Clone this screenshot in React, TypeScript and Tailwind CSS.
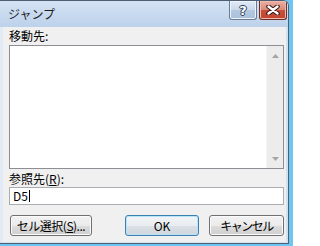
const btn =
  "h-[21px] rounded-[3px] border border-[#707070] bg-[linear-gradient(#f2f2f2,#ebebeb_50%,#dddddd_50%,#cfcfcf)] shadow-[inset_0_0_0_1px_#fbfbfb] flex items-center justify-center text-[12px] leading-[14px]";

const Arrow = ({ up }: { up?: boolean }) => (
  <svg width="7" height="4" viewBox="0 0 7 4">
    <path d={up ? "M3.5 0 L7 4 L0 4 Z" : "M0 0 L7 0 L3.5 4 Z"} fill="#a5a5a5" />
  </svg>
);

export default function App() {
  return (
    <div className="w-[293px] h-[246px] bg-[#6cc6f1] font-['Noto_Sans_CJK_JP',sans-serif] text-[12px] leading-[14px] text-black">
      <div className="w-[289px] h-[244px] flex flex-col border-t border-r border-b border-[#4f5f73] rounded-tr-[6px] bg-[#d3e0ef] overflow-hidden">
        {/* title bar */}
        <div className="h-[26px] flex items-start bg-[linear-gradient(#d4e3f4,#bcd1ea)]">
          <div className="pl-[8px] pt-[5px] leading-[15px] text-[#1e1e1e]">ジャンプ</div>
          <div className="ml-auto flex gap-[2px] pr-[1px]">
            <div className="w-[28px] h-[19px] rounded-b-[3px] border border-t-0 border-[#6b7b93] bg-[linear-gradient(#e2ebf6,#c9d8ea_50%,#b4c8e0_50%,#a9c0dc)] shadow-[inset_0_0_0_1px_#eef4fb] flex items-center justify-center">
              <span className="font-['DejaVu_Sans',sans-serif] font-bold text-[13px] leading-[13px] text-white [text-shadow:1px_0_#2d3e55,-1px_0_#2d3e55,0_1px_#2d3e55,0_-1px_#2d3e55]">
                ?
              </span>
            </div>
            <div className="w-[28px] h-[19px] rounded-b-[3px] border border-t-0 border-[#6d2d24] bg-[linear-gradient(#eab0a3,#d98877_50%,#c6503c_50%,#c2442f)] shadow-[inset_0_0_0_1px_#efb9ad] flex items-center justify-center">
              <svg width="14" height="10" viewBox="0 0 14 10">
                <path d="M2.5 1.5 L11.5 8.5 M11.5 1.5 L2.5 8.5" stroke="#3b1a14" strokeWidth="4.5" strokeLinecap="round" />
                <path d="M2.5 1.5 L11.5 8.5 M11.5 1.5 L2.5 8.5" stroke="#ffffff" strokeWidth="2.4" strokeLinecap="round" />
              </svg>
            </div>
          </div>
        </div>

        <div className="flex flex-1">
          <div className="w-[3px] bg-[#e1eaf5]" />
          {/* client area */}
          <div className="w-[283px] flex flex-col bg-[#f0f0f0] pl-[6px] pr-[2px] pt-[2px]">
            <div className="h-[14px]">移動先:</div>
            <div className="mt-[2px] h-[124px] flex border border-[#8d8f94] bg-white">
              <div className="flex-1" />
              <div className="w-[17px] flex flex-col items-center justify-between pt-[8px] pb-[7px] bg-[#ececec] border-l border-[#f6f6f6]">
                <Arrow up />
                <Arrow />
              </div>
            </div>
            <div className="h-[18px] pt-[3px]">
              参照先(<span className="underline">R</span>):
            </div>
            <div className="h-[18px] flex items-center border border-[#abadb3] bg-white pl-[3px]">
              <span className="leading-[14px]">D5</span>
              <span className="ml-[1px] w-[1px] h-[12px] bg-black" />
            </div>
            <div className="mt-[10px] flex">
              <div className={`${btn} ml-[1px] w-[82px] tracking-[-0.5px]`}>
                セル選択(<span className="underline">S</span>)...
              </div>
              <div className="ml-auto flex gap-[10px]">
                <div className="w-[74px] h-[21px] rounded-[3px] border border-[#3c7fb1] bg-[linear-gradient(#f2f4f6,#e9edf1_50%,#dbe1e6_50%,#cfd6dc)] shadow-[inset_0_0_0_1px_#b9e3f8] flex items-center justify-center">
                  OK
                </div>
                <div className={`${btn} w-[75px] tracking-[-1.5px]`}>キャンセル</div>
              </div>
            </div>
          </div>
          <div className="w-[2px] bg-[#d3e0ef]" />
        </div>
        <div className="h-[1px] bg-[#d3e0ef]" />
      </div>
    </div>
  );
}
